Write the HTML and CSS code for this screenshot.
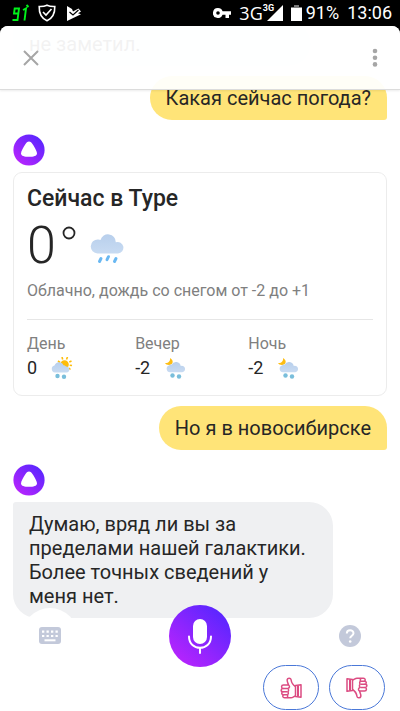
FILE: index.html
```html
<!DOCTYPE html>
<html lang="ru">
<head>
<meta charset="utf-8">
<meta name="viewport" content="width=device-width, initial-scale=1">
<title>Алиса</title>
<link rel="stylesheet" href="styles.css">
</head>
<body>
<svg class="defs" aria-hidden="true">
  <defs>
    <linearGradient id="violet" x1="0.15" y1="0.9" x2="0.85" y2="0.1">
      <stop offset="0" stop-color="#b624fd"/>
      <stop offset="1" stop-color="#5a26ff"/>
    </linearGradient>
    <linearGradient id="sky" x1="0" y1="0" x2="0" y2="1">
      <stop offset="0" stop-color="#b8cfec"/>
      <stop offset="1" stop-color="#c8dbf2"/>
    </linearGradient>
    <symbol id="alice" viewBox="0 0 32 32">
      <circle cx="16" cy="16" r="15.6" fill="url(#violet)"/>
      <path d="M16 7.6c1.600 0 2.600 1 3.800 2.900 1.800 2.800 4.200 6.800 4.200 9 0 2.500-3.600 3.300-8 3.300s-8-.8-8-3.300c0-2.200 2.400-6.200 4.200-9C13.400 8.600 14.400 7.600 16 7.600z" fill="#fff"/>
    </symbol>
    <symbol id="night" viewBox="0 0 22 22">
      <path d="M6 1c4 2 3.500 7-1 7-2 0-3.300-.8-4-2 3.500.3 5.600-2 5-5z" fill="#fdbd12"/>
      <path d="M6 15.200a3.500 3.500 0 0 1-1-6.800 2.500 2.500 0 0 1 2.500-.7 5 5 0 0 1 9.300 1.300 3.200 3.200 0 1 1 .7 6.200z" fill="url(#sky)"/>
      <g fill="#79bedb"><circle cx="8.500" cy="18.500" r="2.200"/><circle cx="15" cy="19.500" r="2.200"/></g>
    </symbol>
    <symbol id="thumb" viewBox="0 0 22 22">
      <g fill="none" stroke="#dc4c82" stroke-width="1.500" stroke-linejoin="round">
        <path d="M15.500 9.500C13 8 11.500 6 11 2.500 10.800.8 7.600.6 7.200 2.500 6.800 4.500 8 6 8.500 8H3.500C1 8 1 11.300 3 11.500c-2.500.2-2.500 3.300 0 3.300-1.800.2-1.800 3 .5 3-1.300.8-.8 3 1 3H11c2 0 3-1.800 4.500-1.800"/>
        <path d="M3 11.500h4M3 14.800h4M3.500 17.800H7M8.500 8c1.500 1 1.500 3-.8 3.500 1.200 1 1.200 2.500 0 3.300 1 1 .8 2.300-.3 3 .7 1 .4 2-.4 3M15.500 8.500l5.500-.8v12.500l-5.500-.7z"/>
        <path d="M18 8.500v11" stroke-width="2"/>
      </g>
    </symbol>
  </defs>
</svg>

<div class="status">
  <div class="status-side">
    <svg width="20" height="18" viewBox="0 0 20 18" role="img" aria-label="91"><g fill="none" stroke="#00f21a" stroke-width="1.900"><path d="M8 9.500H4l.7-5H9L7.500 16H2.500M13 6l3-1.500-1.500 12M16.500 1l2 2"/></g></svg>
    <svg width="20" height="18" viewBox="0 0 20 18" aria-hidden="true"><g fill="none" stroke="#fff" stroke-width="1.600"><path d="M10 1.200c2.500 1.200 5 1.400 7.800 1.300.2 7.500-2.700 12-7.800 14.200C4.800 14.500 2 10 2.200 2.500 5 2.600 7.500 2.400 10 1.200z"/><path d="M6 8l3 3 5.500-6"/></g></svg>
    <svg width="20" height="18" viewBox="0 0 20 18" aria-hidden="true"><path d="M3 2l5 3 1 2.500L14.500 4.500l2.500 3-3 1.700 3 1L3 17z" fill="#fff"/><path d="M5.500 8l3.500 3 5.500-5" fill="none" stroke="#000" stroke-width="1.200"/></svg>
  </div>
  <div class="status-side">
    <svg width="18" height="10" viewBox="0 0 18 10" aria-hidden="true"><path fill="#fff" fill-rule="evenodd" d="M5 0a5 5 0 0 1 4.600 3.200H18v3.600h-2V10h-3.500V6.800H9.600A5 5 0 1 1 5 0zm0 3.200a1.800 1.800 0 1 0 0 3.600 1.800 1.800 0 0 0 0-3.600z"/></svg>
    <span class="network">3G</span>
    <span class="signal"><span class="signal-tag">3G</span><svg width="16" height="16" viewBox="0 0 16 16" aria-hidden="true"><path d="M16 0v16H0z" fill="#fff"/></svg></span>
    <svg class="battery" width="11" height="16" viewBox="0 0 11 16" aria-hidden="true"><path d="M3 0h5v2H3z" fill="#777"/><path d="M0 2.500h11V16H0z" fill="#fff"/></svg>
    <span>91%</span>
    <span class="clock">13:06</span>
  </div>
</div>

<main class="sheet">
  <header class="topbar">
    <button class="icon-button" type="button" aria-label="Закрыть"><svg width="16" height="16" viewBox="0 0 16 16"><path d="M1 1l14 14M15 1L1 15" stroke="#a6a6a6" stroke-width="2"/></svg></button>
    <button class="icon-button" type="button" aria-label="Меню"><svg width="6" height="20" viewBox="0 0 6 20"><g fill="#a6a6a6"><circle cx="3" cy="3" r="2.300"/><circle cx="3" cy="9.700" r="2.300"/><circle cx="3" cy="16.400" r="2.300"/></g></svg></button>
  </header>

  <div class="chat">
    <p class="bubble reply earlier">не заметил.</p>
    <p class="bubble mine">Какая сейчас погода?</p>
    <svg class="avatar" role="img" aria-label="Алиса"><use href="#alice"/></svg>
    <section class="card">
      <h2>Сейчас в Туре</h2>
      <div class="now">
        <span class="degrees">0</span>
        <svg width="14" height="40" viewBox="0 0 14 40" role="img" aria-label="градусов"><circle cx="7" cy="7" r="5.500" fill="none" stroke="#262626" stroke-width="1.800"/></svg>
        <svg class="rain" width="34" height="32" viewBox="0 0 34 32" aria-hidden="true">
          <path d="M7.500 21.500A7 7 0 0 1 8 7.500a5 5 0 0 1 2.500.5 7.800 7.800 0 0 1 15.300 2.200 5.800 5.800 0 1 1 2.200 11.300z" fill="url(#sky)"/>
          <path d="M11 26.500l-1.500 3M18.500 24.700l-1.500 3M26 26.500l-1.500 3" stroke="#69b8f2" stroke-width="3" stroke-linecap="round"/>
        </svg>
      </div>
      <p class="summary">Облачно, дождь со снегом от -2 до +1</p>
      <dl class="forecast">
        <div><dt>День</dt><dd><span>0</span><svg width="22" height="22" viewBox="0 0 22 22" aria-hidden="true"><g stroke="#ffbd08" stroke-width="1.600"><circle cx="13.500" cy="7.500" r="3.500" fill="#ffbd08"/><path d="M7 4l2 1.500M11 0l.7 2.500M16.500 0l-1 2.500M20.500 4l-2.200 1M21 8.500l-2.300-.3M19.500 12.500l-1.800-1.500"/></g><path d="M4 15.500a3.500 3.500 0 0 1-.5-6.900 4.800 4.800 0 0 1 9-.3 3.500 3.500 0 0 1 2.500 1.200 3 3 0 0 1 .5 6z" fill="url(#sky)"/><g fill="#79bedb"><circle cx="6.500" cy="19" r="2.200"/><circle cx="13" cy="19.800" r="2.200"/></g></svg></dd></div>
        <div><dt>Вечер</dt><dd><span>-2</span><svg width="22" height="22"><use href="#night"/></svg></dd></div>
        <div><dt>Ночь</dt><dd><span>-2</span><svg width="22" height="22"><use href="#night"/></svg></dd></div>
      </dl>
    </section>
    <p class="bubble mine">Но я в новосибирске</p>
    <svg class="avatar" role="img" aria-label="Алиса"><use href="#alice"/></svg>
    <p class="bubble reply">Думаю, вряд ли вы за пределами нашей галактики. Более точных сведений у меня нет.</p>
  </div>

  <footer class="dock">
    <div class="controls">
      <button class="round" type="button" aria-label="Клавиатура"><svg width="24" height="18" viewBox="0 0 24 18"><rect x="1" width="22" height="17" rx="3" fill="#c3c9da"/><path d="M4 4.700h16M4 9h16" stroke="#fff" stroke-width="2.200" stroke-dasharray="2.300 2.200"/><path d="M6.500 13.300h11" stroke="#fff" stroke-width="2"/></svg></button>
      <button class="mic" type="button" aria-label="Говорить"><svg width="62" height="62" viewBox="0 0 62 62"><circle cx="31" cy="31" r="31" fill="url(#violet)"/><rect x="24" y="14" width="14" height="25" rx="7" fill="#fff"/><path d="M20 31.500c0 15 22 15 22 0M31 43v5" fill="none" stroke="#fff" stroke-width="2" stroke-linecap="round"/></svg></button>
      <button class="round" type="button" aria-label="Помощь"><svg width="24" height="24" viewBox="0 0 24 24"><circle cx="12" cy="12" r="11" fill="#c3c9da"/><path d="M8.800 9.500c0-4.500 6.700-4.300 6.700-.3 0 2.500-3.300 2.600-3.300 5" fill="none" stroke="#fff" stroke-width="2"/><circle cx="12.200" cy="17.500" r="1.300" fill="#fff"/></svg></button>
    </div>
    <div class="votes">
      <button class="vote" type="button" aria-label="Нравится"><svg width="22" height="22"><use href="#thumb"/></svg></button>
      <button class="vote" type="button" aria-label="Не нравится"><svg class="down" width="22" height="22"><use href="#thumb"/></svg></button>
    </div>
  </footer>
</main>
</body>
</html>
```
FILE: styles.css
```css
* { box-sizing: border-box; }

body {
  margin: 0;
  height: 100vh;
  display: flex;
  flex-direction: column;
  overflow: hidden;
  background: #000;
  color: #262626;
  font-family: Roboto, "Noto Sans", sans-serif;
}

p, h2, dl, dd { margin: 0; }
svg { display: block; flex: none; }
.defs { position: absolute; width: 0; height: 0; }

button {
  padding: 0;
  border: 0;
  background: none;
  display: grid;
  place-items: center;
  cursor: pointer;
}

.status {
  flex: none;
  height: 26px;
  padding: 0 8px 0 10px;
  display: flex;
  align-items: center;
  justify-content: space-between;
  color: #fff;
  font-size: 18px;
  line-height: 26px;
}
.status-side { display: flex; align-items: center; gap: 4px; }
.status-side:first-child { gap: 7px; }
.network { margin-left: 4px; font-family: "Open Sans", sans-serif; }
.signal { position: relative; }
.signal-tag {
  position: absolute;
  top: -1px;
  left: -4px;
  font-size: 9px;
  line-height: 9px;
  font-weight: 700;
}
.battery { margin-left: 4px; }
.clock { margin-left: 4px; }

.sheet {
  position: relative;
  flex: 1;
  min-height: 0;
  display: flex;
  flex-direction: column;
  overflow: hidden;
  border-radius: 8px 8px 0 0;
  background: #fff;
}

.topbar {
  position: absolute;
  inset: 0 0 auto;
  z-index: 1;
  height: 64px;
  padding: 0 12px;
  display: flex;
  align-items: center;
  justify-content: space-between;
  background: rgba(255, 255, 255, 0.94);
  border-bottom: 1px solid #dcdcdc;
  box-shadow: 0 1px 2px rgba(0, 0, 0, 0.08);
}
.icon-button { width: 38px; height: 38px; }
.icon-button:last-child { width: 26px; }

.chat {
  flex: 1;
  min-height: 0;
  padding: 0 13px;
  display: flex;
  flex-direction: column;
  justify-content: flex-end;
}
.chat > * { flex: none; }

.bubble {
  max-width: 320px;
  padding: 10px 16px;
  font-size: 20px;
  line-height: 24px;
}
.mine {
  align-self: flex-end;
  background: #ffe478;
  border-radius: 22px 22px 3px 22px;
}
.reply {
  align-self: flex-start;
  background: #eff0f2;
  border-radius: 3px 24px 24px 24px;
}
.earlier { width: 298px; margin-bottom: 10px; }

.avatar { width: 32px; height: 32px; margin: 14px 0 6px; }

.card {
  margin-bottom: 10px;
  padding: 12px 13px 15px;
  border: 1px solid #ececec;
  border-radius: 9px;
}
.card h2 { font-size: 23px; line-height: 28px; font-weight: 500; }
.now { display: flex; align-items: center; height: 66px; gap: 6px; }
.degrees { font-size: 52px; line-height: 66px; font-weight: 300; }
.rain { margin: 4px 0 0 8px; }
.summary {
  padding-bottom: 16px;
  border-bottom: 1px solid #e6e6e6;
  color: #808080;
  font-size: 16px;
  line-height: 24px;
}
.forecast { display: flex; padding-top: 12px; font-size: 16px; line-height: 24px; }
.forecast div { margin-right: 62px; }
.forecast dt { color: #808080; }
.forecast dd { display: flex; align-items: center; gap: 14px; font-size: 18px; }

.dock { position: relative; flex: none; margin-top: -13px; padding: 0 15px 1px; }
.controls { display: flex; align-items: center; justify-content: space-between; padding: 0 7px; }
.round { width: 56px; height: 56px; border-radius: 50%; background: #fff; }
.votes { display: flex; justify-content: flex-end; gap: 10px; margin-top: -2px; }
.vote {
  width: 56px;
  height: 45px;
  border: 1px solid #4a78d8;
  border-radius: 23px;
  background: #fff;
}
.down { transform: rotate(180deg); }
```
